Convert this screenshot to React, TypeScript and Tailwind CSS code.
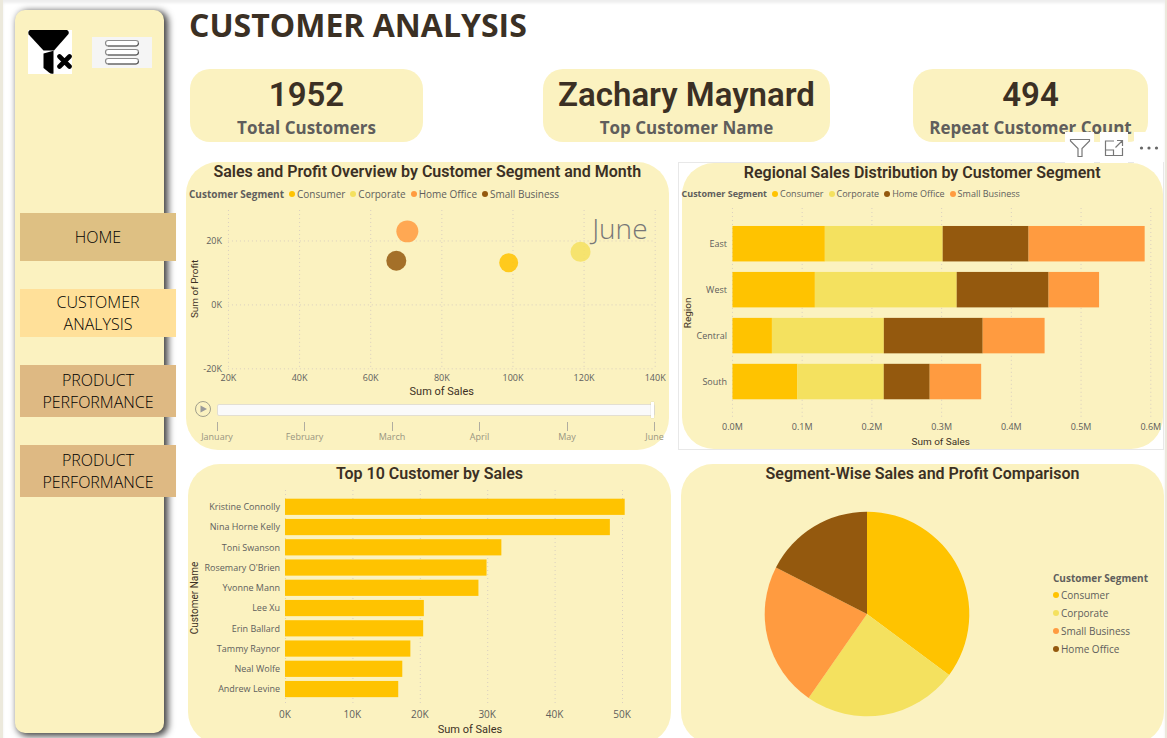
import { useState } from "react";
import type { ReactNode } from "react";

const COLORS = {
  gold: "#ffc300",
  lemon: "#f4e15f",
  orange: "#ff9b40",
  brown: "#94590e",
};

type LegendEntry = { label: string; color: string };

function Dot({ color }: { color: string }) {
  return (
    <svg viewBox="0 0 6 6" className="size-[6px] shrink-0" aria-hidden="true">
      <circle cx="3" cy="3" r="3" fill={color} />
    </svg>
  );
}

function Legend({ items, small }: { items: LegendEntry[]; small?: boolean }) {
  return (
    <div
      className={
        small
          ? "flex h-[22px] items-center gap-[5px] whitespace-nowrap text-[9px] text-[#605e5c]"
          : "flex h-6 items-center gap-[5px] whitespace-nowrap pl-[3px] text-[10px] text-[#605e5c]"
      }
    >
      <span className="font-bold">Customer Segment</span>
      {items.map((item) => (
        <span key={item.label} className="flex items-center gap-[2px]">
          <Dot color={item.color} />
          {item.label}
        </span>
      ))}
    </div>
  );
}

function CardTitle({ children }: { children: ReactNode }) {
  return (
    <h2 className="text-center font-['Roboto',sans-serif] text-[16px] leading-5 font-semibold text-[#3b3024]">
      {children}
    </h2>
  );
}

function Kpi({ value, label, className }: { value: string; label: string; className: string }) {
  return (
    <div className={`h-[73px] rounded-[20px] bg-[#fbf2c0] pt-[5px] text-center whitespace-nowrap ${className}`}>
      <div className="font-['Roboto',sans-serif] text-[33px] leading-[42px] font-semibold text-[#3b3024]">{value}</div>
      <div className="text-[17px] leading-6 font-bold text-[#605e5c]">{label}</div>
    </div>
  );
}

const GRID = { stroke: "#d9cfc0", strokeDasharray: "1 3", strokeWidth: 1 };

const bubbles = [
  { name: "Home Office", sales: 70.3, profit: 23, r: 11, color: COLORS.orange },
  { name: "Small Business", sales: 67.2, profit: 13.8, r: 10, color: COLORS.brown },
  { name: "Consumer", sales: 98.8, profit: 13.2, r: 9.5, color: COLORS.gold },
  { name: "Corporate", sales: 119, profit: 16.6, r: 10, color: COLORS.lemon },
];

function BubbleChart({ month }: { month: string }) {
  const x = (v: number) => 42.5 + (v - 20) * 3.56;
  const y = (v: number) => 99 - v * 3.2;
  return (
    <svg viewBox="0 0 483 192" className="h-auto w-full" role="img" aria-label="Sales and profit bubbles">
      {[20, 40, 60, 80, 100, 120, 140].map((v) => (
        <g key={v}>
          <line x1={x(v)} x2={x(v)} y1="4" y2="163" {...GRID} />
          <text x={x(v)} y="175" textAnchor="middle" fontSize="9" fill="#605e5c">{v}K</text>
        </g>
      ))}
      {[20, 0, -20].map((v) => (
        <g key={v}>
          <line x1="42" x2="470" y1={y(v)} y2={y(v)} {...GRID} />
          <text x="36" y={y(v) + 3} textAnchor="end" fontSize="9" fill="#605e5c">{v}K</text>
        </g>
      ))}
      <text x="256" y="189" textAnchor="middle" fontSize="11" fill="#3b3024" className="font-['Roboto',sans-serif]">Sum of Sales</text>
      <text transform="translate(12 83) rotate(-90)" textAnchor="middle" fontSize="10" fill="#3b3024" className="font-['Roboto',sans-serif]">Sum of Profit</text>
      {bubbles.map((b) => (
        <circle key={b.name} cx={x(b.sales)} cy={y(b.profit)} r={b.r} fill={b.color} fillOpacity="0.85" />
      ))}
      <text x="462" y="33" textAnchor="end" fontSize="28" fill="#777777" fontWeight="300">{month}</text>
    </svg>
  );
}

const months = ["January", "February", "March", "April", "May", "June"];

function Timeline({ index, onChange }: { index: number; onChange: (i: number) => void }) {
  return (
    <div className="flex gap-[6px] pr-[14px] pb-[7px] pl-[9px]">
      <button
        type="button"
        aria-label="Play"
        onClick={() => onChange((index + 1) % months.length)}
        className="mt-[3px] size-4 shrink-0"
      >
        <svg viewBox="0 0 16 16" className="size-4">
          <circle cx="8" cy="8" r="7.5" fill="none" stroke="#a19f8c" />
          <path d="M5.5 4.5 12 8l-6.5 3.5z" fill="#999999" />
        </svg>
      </button>
      <div className="min-w-0 flex-1">
        <input
          type="range"
          aria-label="Month"
          min={0}
          max={5}
          value={index}
          onChange={(e) => onChange(Number(e.target.value))}
          className="my-[6px] block h-3 w-full appearance-none rounded-[2px] border border-[#e3dfd2] bg-[#fafafa] [&::-webkit-slider-thumb]:h-4 [&::-webkit-slider-thumb]:w-[3px] [&::-webkit-slider-thumb]:appearance-none [&::-webkit-slider-thumb]:bg-white [&::-webkit-slider-thumb]:shadow-[0_0_1px_#999999]"
        />
        <ul className="flex justify-between text-[9px] leading-3 text-[#999580]">
          {months.map((m) => (
            <li key={m} className="flex w-0 flex-col items-center">
              <span className="h-[9px] w-px shrink-0 bg-[#b0ada0]" />
              {m}
            </li>
          ))}
        </ul>
      </div>
    </div>
  );
}

const stackOrder = [COLORS.gold, COLORS.lemon, COLORS.brown, COLORS.orange];
const regions = [
  { name: "East", values: [0.1325, 0.169, 0.1232, 0.1665] },
  { name: "West", values: [0.1182, 0.2034, 0.1318, 0.0724] },
  { name: "Central", values: [0.0566, 0.1605, 0.1418, 0.0888] },
  { name: "South", values: [0.0931, 0.1239, 0.0659, 0.0738] },
];

function RegionChart() {
  const x = (v: number) => 50.5 + v * 698;
  return (
    <svg viewBox="0 -1 482 242" className="h-auto w-full" role="img" aria-label="Sales by region">
      {[0, 1, 2, 3, 4, 5, 6].map((t) => (
        <g key={t}>
          <line x1={x(t / 10)} x2={x(t / 10)} y1="2" y2="213" {...GRID} />
          <text x={x(t / 10)} y="224" textAnchor="middle" fontSize="9" fill="#605e5c">{`0.${t}M`}</text>
        </g>
      ))}
      {regions.map((r, i) => {
        let start = 0;
        return (
          <g key={r.name}>
            <text x="45" y={41 + i * 46} textAnchor="end" fontSize="9" fill="#605e5c">{r.name}</text>
            {r.values.map((v, k) => {
              const left = x(start);
              start += v;
              return <rect key={k} x={left} y={20 + i * 46} width={v * 698} height="35.5" fill={stackOrder[k]} />;
            })}
          </g>
        );
      })}
      <text x="259" y="239" textAnchor="middle" fontSize="10" fill="#3b3024" className="font-['Roboto',sans-serif]">Sum of Sales</text>
      <text transform="translate(9 107) rotate(-90)" textAnchor="middle" fontSize="10" fill="#3b3024" className="font-['Roboto',sans-serif]">Region</text>
    </svg>
  );
}

const customers = [
  { name: "Kristine Connolly", sales: 50.4 },
  { name: "Nina Horne Kelly", sales: 48.2 },
  { name: "Toni Swanson", sales: 32.1 },
  { name: "Rosemary O'Brien", sales: 29.9 },
  { name: "Yvonne Mann", sales: 28.7 },
  { name: "Lee Xu", sales: 20.6 },
  { name: "Erin Ballard", sales: 20.5 },
  { name: "Tammy Raynor", sales: 18.6 },
  { name: "Neal Wolfe", sales: 17.4 },
  { name: "Andrew Levine", sales: 16.8 },
];

function CustomerChart() {
  const x = (v: number) => 97 + v * 6.74;
  return (
    <svg viewBox="0 0 483 260" className="h-auto w-full" role="img" aria-label="Top customers">
      {[0, 10, 20, 30, 40, 50].map((t) => (
        <g key={t}>
          <line x1={x(t) + 0.5} x2={x(t) + 0.5} y1="6" y2="222" {...GRID} />
          <text x={x(t)} y="234" textAnchor="middle" fontSize="10" fill="#605e5c">{t}K</text>
        </g>
      ))}
      {customers.map((c, i) => (
        <g key={c.name}>
          <text x="92" y={26 + i * 20.25} textAnchor="end" fontSize="9" fill="#605e5c">{c.name}</text>
          <rect x="97" y={14.7 + i * 20.25} width={c.sales * 6.74} height="16.2" fill={COLORS.gold} />
        </g>
      ))}
      <text x="282" y="249" textAnchor="middle" fontSize="11" fill="#3b3024" className="font-['Roboto',sans-serif]">Sum of Sales</text>
      <text transform="translate(10 114) rotate(-90)" textAnchor="middle" fontSize="10" fill="#3b3024" className="font-['Roboto',sans-serif]">Customer Name</text>
    </svg>
  );
}

const slices = [
  { label: "Consumer", color: COLORS.gold, from: 0, to: 126.6 },
  { label: "Corporate", color: COLORS.lemon, from: 126.6, to: 214.8 },
  { label: "Small Business", color: COLORS.orange, from: 214.8, to: 297.1 },
  { label: "Home Office", color: COLORS.brown, from: 297.1, to: 360 },
];

function PieChart() {
  const point = (deg: number) => {
    const a = (deg * Math.PI) / 180;
    return `${186 + 102.3 * Math.sin(a)} ${130 - 102.3 * Math.cos(a)}`;
  };
  return (
    <svg viewBox="0 0 372 260" className="h-auto min-w-0 flex-1" role="img" aria-label="Sales by segment">
      {slices.map((s) => (
        <path key={s.label} d={`M186 130 L${point(s.from)} A102.3 102.3 0 0 1 ${point(s.to)} Z`} fill={s.color} />
      ))}
    </svg>
  );
}

function ClearFilterIcon() {
  return (
    <svg viewBox="0 0 44 44" className="size-11">
      <path d="M2 0H39Q41.500 1 40.500 4L26 20.500H15.500L.7 4.500Q-.5 1 2 0Z" fill="#000" />
      <path d="M15.500 23.500 25.500 20.800V43.500Q23.500 44.500 21 42.500L15.500 38Z" fill="#000" />
      <path d="m31.500 26.500 10 10m0-10-10 10" stroke="#000" strokeWidth="4.600" strokeLinecap="round" />
    </svg>
  );
}

function MenuIcon() {
  return (
    <svg viewBox="0 0 36 26" className="h-[26px] w-9">
      {[1, 10, 19].map((y) => (
        <g key={y}>
          <rect x="1.500" y={y + 0.5} width="33" height="5.500" rx="2.700" fill="#fff" stroke="#8c8c8c" strokeWidth="1.200" />
          <path d={`M4 ${y + 6}H32Q34.500 ${y + 6} 34.500 ${y + 3}`} fill="none" stroke="#555" strokeWidth="1" />
        </g>
      ))}
    </svg>
  );
}

const navItems = [
  { label: "HOME", className: "h-12 bg-[#dec083]" },
  { label: "CUSTOMER ANALYSIS", className: "h-12 bg-[#ffe099]" },
  { label: "PRODUCT PERFORMANCE", className: "h-[52px] bg-[#deb983]" },
  { label: "PRODUCT PERFORMANCE", className: "h-[52px] bg-[#deb983]" },
];

export default function App() {
  const [month, setMonth] = useState(5);
  return (
    <div className="flex min-h-screen border-r-2 border-l-[3px] border-[#ece9dc] bg-white pr-px pl-3 font-['Open_Sans',sans-serif] shadow-[inset_0_3px_3px_#eeeeee]">
      <aside className="mt-[10px] h-[723px] w-[149px] shrink-0 rounded-[10px] bg-[#fbf2c0] shadow-[3px_2px_7px_1px_rgba(0,0,0,0.75)]">
        <div className="flex items-center justify-between pt-[20px] pr-3 pl-[13px]">
          <button type="button" aria-label="Clear filters" className="bg-white">
            <ClearFilterIcon />
          </button>
          <button type="button" aria-label="Menu" className="flex h-[31px] w-[60px] items-center justify-center bg-[#f5f5f5]">
            <MenuIcon />
          </button>
        </div>
        <nav className="-mr-3 ml-[5px] flex flex-col gap-7 pt-[139px]">
          {navItems.map((item, i) => (
            <a
              key={i}
              href="#"
              className={`flex items-center justify-center px-5 text-center text-[16px] leading-[22px] font-light text-black ${item.className}`}
            >
              {item.label}
            </a>
          ))}
        </nav>
      </aside>

      <main className="ml-[22px] min-w-0 flex-1">
        <h1 className="mb-[19px] pl-[3px] text-[32px] leading-[50px] font-bold whitespace-nowrap text-[#3b3024]">CUSTOMER ANALYSIS</h1>

        <section className="grid grid-cols-[233fr_120fr_287fr_83fr_235fr] pr-4 pl-1">
          <Kpi value="1952" label="Total Customers" className="col-start-1" />
          <Kpi value="Zachary Maynard" label="Top Customer Name" className="col-start-3" />
          <Kpi value="494" label="Repeat Customer Count" className="col-start-5" />
        </section>

        <section className="mt-5 grid grid-cols-[483fr_487fr] gap-[9px]">
          <article className="min-w-0 rounded-[32px] bg-[#fbf2c0]">
            <CardTitle>Sales and Profit Overview by Customer Segment and Month</CardTitle>
            <Legend
              items={[
                { label: "Consumer", color: COLORS.gold },
                { label: "Corporate", color: COLORS.lemon },
                { label: "Home Office", color: COLORS.orange },
                { label: "Small Business", color: COLORS.brown },
              ]}
            />
            <BubbleChart month={months[month]} />
            <Timeline index={month} onChange={setMonth} />
          </article>

          <div className="relative min-w-0 border border-[#e8e8e8] pl-[3px]">
            <div className="absolute right-0 bottom-full flex gap-[6px]">
              <button type="button" aria-label="Filters" className="flex h-[31px] w-[29px] items-center justify-center bg-white">
                <svg viewBox="0 0 22 20" className="h-5 w-[22px]" fill="none" stroke="#777" strokeWidth="1.200">
                  <path d="M1.500 1.500H20.500V3L13 10.500V18.500H9V10.500L1.500 3Z" />
                </svg>
              </button>
              <button type="button" aria-label="Focus mode" className="flex h-[31px] w-[28px] items-center justify-center bg-white">
                <svg viewBox="0 0 20 18" className="h-[18px] w-5" fill="none" stroke="#777" strokeWidth="1.200">
                  <path d="M10 2H1.500V16.500H18.500V9M1.500 11H9.500V16.500M11.500 8.500 18 2M13 1.500H18.500V7" />
                </svg>
              </button>
              <button type="button" aria-label="More options" className="flex h-[31px] w-[29px] items-center justify-center bg-white">
                <svg viewBox="0 0 20 4" className="h-1 w-5" fill="#666">
                  <circle cx="2.500" cy="2" r="1.600" />
                  <circle cx="10" cy="2" r="1.600" />
                  <circle cx="17.500" cy="2" r="1.600" />
                </svg>
              </button>
            </div>
            <article className="h-full rounded-[32px] bg-[#fbf2c0]">
              <CardTitle>Regional Sales Distribution by Customer Segment</CardTitle>
              <Legend
                small
                items={[
                  { label: "Consumer", color: COLORS.gold },
                  { label: "Corporate", color: COLORS.lemon },
                  { label: "Home Office", color: COLORS.brown },
                  { label: "Small Business", color: COLORS.orange },
                ]}
              />
              <RegionChart />
            </article>
          </div>
        </section>

        <section className="mt-[14px] flex items-stretch gap-[10px] pl-[2px]">
          <article className="min-w-0 flex-1 rounded-[32px] bg-[#fbf2c0]">
            <CardTitle>Top 10 Customer by Sales</CardTitle>
            <CustomerChart />
          </article>
          <article className="min-w-0 flex-1 rounded-[32px] bg-[#fbf2c0]">
            <CardTitle>Segment-Wise Sales and Profit Comparison</CardTitle>
            <div className="flex items-center">
              <PieChart />
              <div className="w-[111px] shrink-0 text-[10px] leading-[18px] whitespace-nowrap text-[#605e5c]">
                <div className="leading-4 font-bold">Customer Segment</div>
                <ul>
                  {slices.map((s) => (
                    <li key={s.label} className="flex items-center gap-[2px]">
                      <Dot color={s.color} />
                      {s.label}
                    </li>
                  ))}
                </ul>
              </div>
            </div>
          </article>
        </section>
      </main>
    </div>
  );
}
